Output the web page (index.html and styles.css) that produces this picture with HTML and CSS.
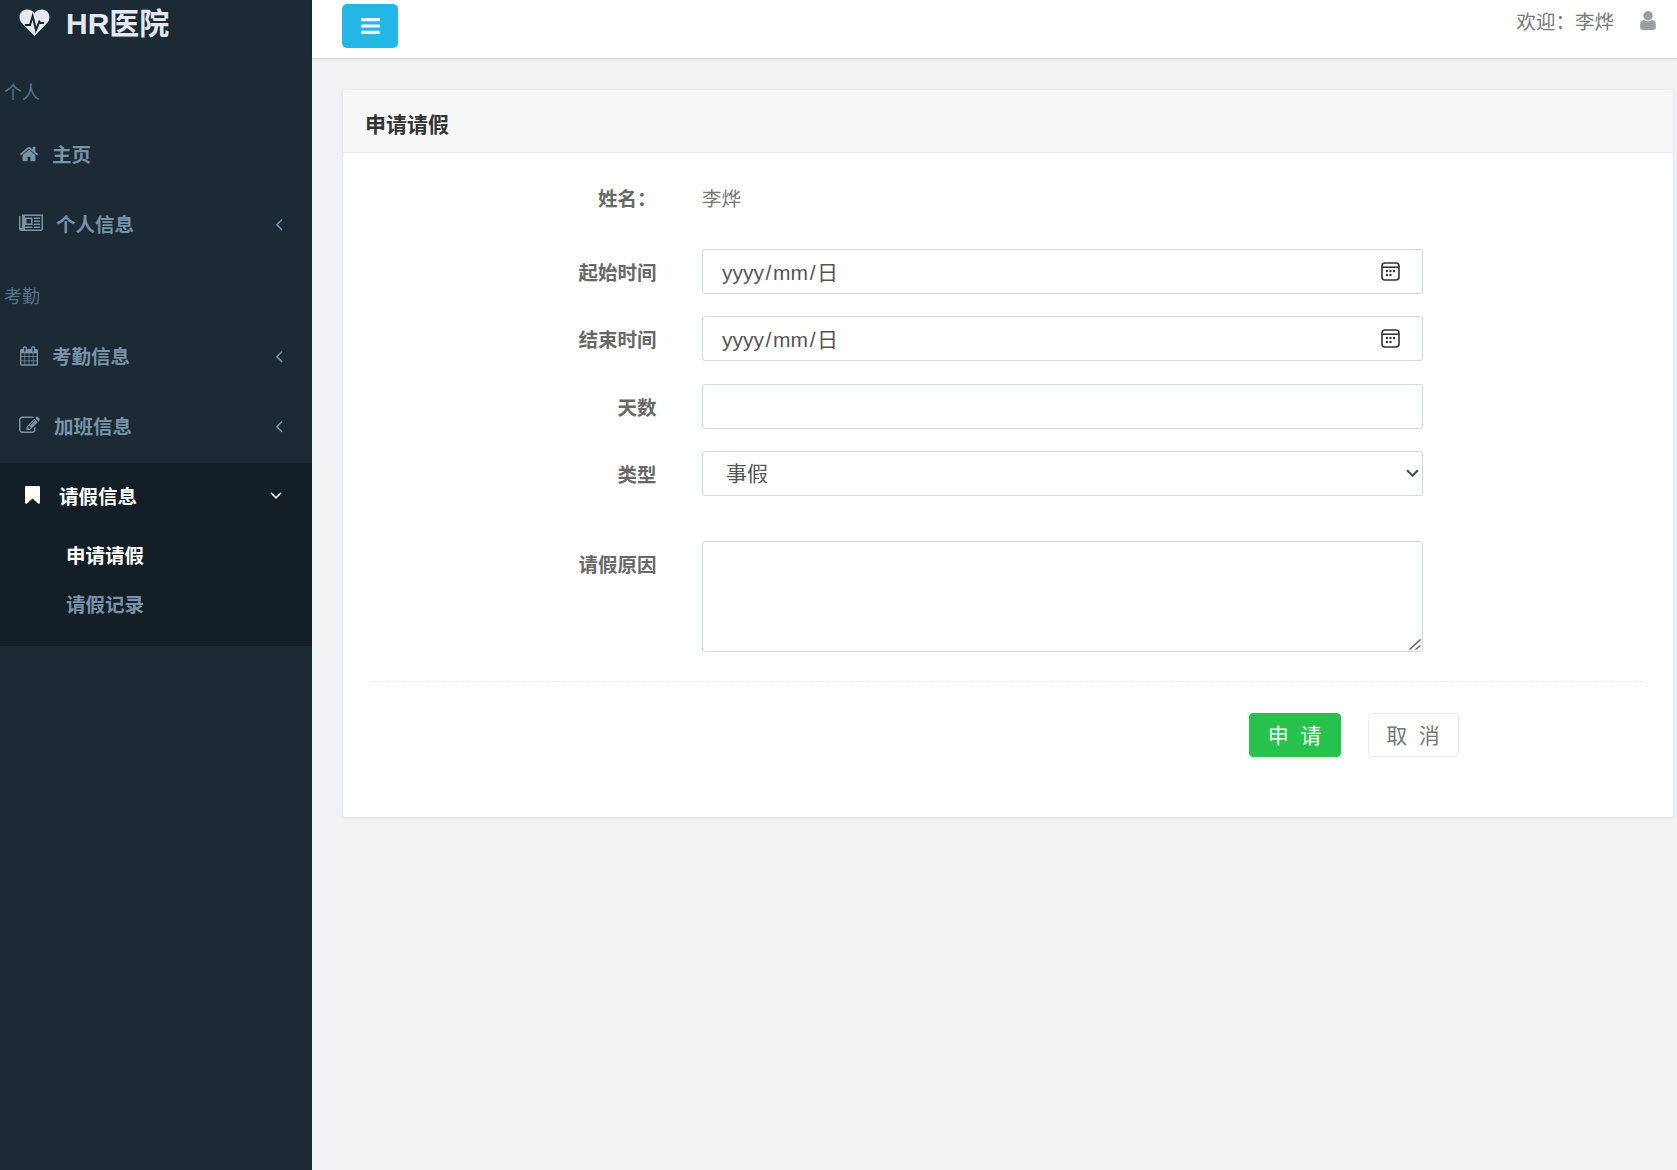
FILE: index.html
```html
<!DOCTYPE html>
<html lang="zh-CN">
<head>
<meta charset="utf-8">
<title>HR医院</title>
<link rel="stylesheet" href="styles.css">
</head>
<body>
<div class="app">
  <aside class="sidebar">
    <div class="logo">
      <svg class="logo-icon" viewBox="0 0 31 27"><path class="heart" d="M15.500 27 3 14.300C-1.600 9.500.4.500 8 .5c3.300 0 6 1.500 7.500 4 1.500-2.500 4.200-4 7.500-4 7.600 0 9.600 9 5 13.800z"/><polyline class="pulse" points="6,16 11,16 13.700,7 17,21 20.300,12.700 21.500,14 25,14"/></svg>
      <span>HR医院</span>
    </div>
    <div class="nav-label nav-label-first">个人</div>
    <a class="nav-item nav-item-first">
      <svg class="icon ic-home" viewBox="0 0 1792 1792"><path d="M1472 992v480q0 26-19 45t-45 19h-384v-384h-256v384h-384q-26 0-45-19t-19-45v-480q0-1 .5-3t.5-3l575-474 575 474q1 2 1 6zm223-69l-62 74q-8 9-21 11h-3q-13 0-21-7l-692-577-692 577q-12 8-24 7-13-2-21-11l-62-74q-8-10-7-23.500t11-21.500l719-599q32-26 76-26t76 26l244 204v-195q0-14 9-23t23-9h192q14 0 23 9t9 23v408l219 182q10 8 11 21.500t-7 23.500z"/></svg>
      <span>主页</span>
    </a>
    <a class="nav-item">
      <svg class="icon ic-news" viewBox="0 0 2048 1792"><path d="M1024 512h-384v384h384v-384zm128 640v128h-640v-128h640zm0-768v640h-640v-640h640zm640 768v128h-512v-128h512zm0-256v128h-512v-128h512zm0-256v128h-512v-128h512zm0-256v128h-512v-128h512zm128 960v-1088h-1408v1088q0 33-11 64h1355q26 0 45-19t19-45zm-1664-128v-960h-128v960q0 26 19 45t45 19 45-19 19-45zm1792-1088v1216q0 80-56 136t-136 56h-1664q-80 0-136-56t-56-136v-1088h256v-128h1664z"/></svg>
      <span>个人信息</span>
      <svg class="chev" viewBox="0 0 1792 1792"><path d="M1203 544q0 13-10 23l-393 393 393 393q10 10 10 23t-10 23l-50 50q-10 10-23 10t-23-10l-466-466q-10-10-10-23t10-23l466-466q10-10 23-10t23 10l50 50q10 10 10 23z"/></svg>
    </a>
    <div class="nav-label">考勤</div>
    <a class="nav-item">
      <svg class="icon ic-cal" viewBox="0 0 1664 1792"><path d="M128 1664h288v-288h-288v288zm352 0h320v-288h-320v288zm-352-352h288v-320h-288v320zm352 0h320v-320h-320v320zm-352-384h288v-288h-288v288zm736 736h320v-288h-320v288zm-384-736h320v-288h-320v288zm768 736h288v-288h-288v288zm-384-352h320v-320h-320v320zm-352-864v-288q0-13-9.500-22.500t-22.500-9.500h-64q-13 0-22.500 9.500t-9.500 22.500v288q0 13 9.500 22.500t22.500 9.500h64q13 0 22.500-9.500t9.500-22.500zm736 864h288v-320h-288v320zm-384-384h320v-288h-320v288zm384 0h288v-288h-288v288zm32-480v-288q0-13-9.500-22.500t-22.500-9.500h-64q-13 0-22.500 9.500t-9.500 22.500v288q0 13 9.500 22.500t22.500 9.500h64q13 0 22.500-9.500t9.500-22.500zm384-64v1280q0 52-38 90t-90 38h-1408q-52 0-90-38t-38-90v-1280q0-52 38-90t90-38h128v-96q0-66 47-113t113-47h64q66 0 113 47t47 113v96h384v-96q0-66 47-113t113-47h64q66 0 113 47t47 113v96h128q52 0 90 38t38 90z"/></svg>
      <span>考勤信息</span>
      <svg class="chev" viewBox="0 0 1792 1792"><path d="M1203 544q0 13-10 23l-393 393 393 393q10 10 10 23t-10 23l-50 50q-10 10-23 10t-23-10l-466-466q-10-10-10-23t10-23l466-466q10-10 23-10t23 10l50 50q10 10 10 23z"/></svg>
    </a>
    <a class="nav-item">
      <svg class="icon ic-edit" viewBox="0 0 1792 1792"><path d="M888 1184l116-116-152-152-116 116v56h96v96h56zm440-720q-16-16-33 1l-350 350q-17 17-1 33t33-1l350-350q17-17 1-33zm80 594v190q0 119-84.500 203.500t-203.500 84.500h-832q-119 0-203.500-84.500t-84.500-203.500v-832q0-119 84.500-203.500t203.500-84.500h832q63 0 117 25 15 7 18 23 3 17-9 29l-49 49q-14 14-32 8-23-6-45-6h-832q-66 0-113 47t-47 113v832q0 66 47 113t113 47h832q66 0 113-47t47-113v-126q0-13 9-22l64-64q15-15 35-7t20 29zm-96-738l288 288-672 672h-288v-288zm444 132l-92 92-288-288 92-92q28-28 68-28t68 28l152 152q28 28 28 68t-28 68z"/></svg>
      <span>加班信息</span>
      <svg class="chev" viewBox="0 0 1792 1792"><path d="M1203 544q0 13-10 23l-393 393 393 393q10 10 10 23t-10 23l-50 50q-10 10-23 10t-23-10l-466-466q-10-10-10-23t10-23l466-466q10-10 23-10t23 10l50 50q10 10 10 23z"/></svg>
    </a>
    <div class="nav-group">
      <a class="nav-item nav-item-open">
        <svg class="icon ic-book" viewBox="256 128 1280 1536"><path d="M1420 128q23 0 44 9 33 13 52.500 41t19.500 62v1289q0 34-19.500 62t-52.500 41q-19 8-44 8-48 0-83-32l-441-424-441 424q-36 33-83 33-23 0-44-9-33-13-52.500-41t-19.500-62v-1289q0-34 19.500-62t52.500-41q21-9 44-9h1048z"/></svg>
        <span>请假信息</span>
        <svg class="chev chev-open" viewBox="0 0 1792 1792"><path d="M1395 736q0 13-10 23l-466 466q-10 10-23 10t-23-10l-466-466q-10-10-10-23t10-23l50-50q10-10 23-10t23 10l393 393 393-393q10-10 23-10t23 10l50 50q10 10 10 23z"/></svg>
      </a>
      <a class="sub-item sub-item-active">申请请假</a>
      <a class="sub-item">请假记录</a>
    </div>
  </aside>
  <div class="main">
    <header class="topbar">
      <button class="menu-btn" type="button">
        <svg class="menu-icon" viewBox="128 256 1536 1280"><path d="M1664 1344v128q0 26-19 45t-45 19h-1408q-26 0-45-19t-19-45v-128q0-26 19-45t45-19h1408q26 0 45 19t19 45zm0-512v128q0 26-19 45t-45 19h-1408q-26 0-45-19t-19-45v-128q0-26 19-45t45-19h1408q26 0 45 19t19 45zm0-512v128q0 26-19 45t-45 19h-1408q-26 0-45-19t-19-45v-128q0-26 19-45t45-19h1408q26 0 45 19t19 45z"/></svg>
      </button>
      <div class="user">
        <span>欢迎：李烨</span>
        <svg class="user-icon" viewBox="256 128 1280 1536"><path d="M1536 1399q0 109-62.500 187t-150.500 78h-854q-88 0-150.500-78t-62.500-187q0-85 8.500-160.500t31.500-152 58.500-131 94-89 134.500-34.500q131 128 313 128t313-128q76 0 134.500 34.500t94 89 58.500 131 31.500 152 8.500 160.500zm-256-887q0 159-112.500 271.500t-271.500 112.500-271.500-112.500-112.500-271.500 112.500-271.500 271.500-112.500 271.500 112.500 112.500 271.500z"/></svg>
      </div>
    </header>
    <section class="card">
      <div class="card-head">申请请假</div>
      <form class="card-body">
        <div class="form-row form-row-name">
          <label class="form-label">姓名：</label>
          <div class="form-static">李烨</div>
        </div>
        <div class="form-row">
          <label class="form-label">起始时间</label>
          <div class="control date-control">
            <span class="date-text">yyyy<span class="date-sep">/</span>mm<span class="date-sep">/</span>日</span>
            <svg class="date-icon" viewBox="0 0 19 19"><rect x="1" y="1" width="17" height="17" rx="3"/><path d="M1 5.200h17"/><g class="dots"><circle cx="6" cy="9" r="1.200"/><circle cx="9.500" cy="9" r="1.200"/><circle cx="13" cy="9" r="1.200"/><circle cx="6" cy="13" r="1.200"/><circle cx="9.500" cy="13" r="1.200"/></g></svg>
          </div>
        </div>
        <div class="form-row">
          <label class="form-label">结束时间</label>
          <div class="control date-control">
            <span class="date-text">yyyy<span class="date-sep">/</span>mm<span class="date-sep">/</span>日</span>
            <svg class="date-icon" viewBox="0 0 19 19"><rect x="1" y="1" width="17" height="17" rx="3"/><path d="M1 5.200h17"/><g class="dots"><circle cx="6" cy="9" r="1.200"/><circle cx="9.500" cy="9" r="1.200"/><circle cx="13" cy="9" r="1.200"/><circle cx="6" cy="13" r="1.200"/><circle cx="9.500" cy="13" r="1.200"/></g></svg>
          </div>
        </div>
        <div class="form-row">
          <label class="form-label">天数</label>
          <input class="control" type="text">
        </div>
        <div class="form-row">
          <label class="form-label">类型</label>
          <div class="select-wrap">
            <select class="control control-select"><option>事假</option></select>
            <svg class="select-arrow" viewBox="0 0 12 7"><polyline points="1,1 6,6 11,1"/></svg>
          </div>
        </div>
        <div class="form-row form-row-area">
          <label class="form-label">请假原因</label>
          <div class="area-wrap">
            <textarea class="control control-area"></textarea>
            <svg class="area-grip" viewBox="0 0 14 14"><path d="M2.500 13.500 13.500 3.500M8.500 13.500l5-4"/></svg>
          </div>
        </div>
        <div class="divider"></div>
        <div class="actions">
          <button class="btn btn-ok" type="button">申&nbsp;&nbsp;请</button>
          <button class="btn btn-cancel" type="button">取&nbsp;&nbsp;消</button>
        </div>
      </form>
    </section>
  </div>
</div>
</body>
</html>
```
FILE: styles.css
```css
* { box-sizing: border-box; }
html, body { margin: 0; height: 100%; }
body {
  height: 1170px;
  overflow: hidden;
  background: #f0f2f4;
  font-family: "Liberation Sans", "Noto Sans CJK SC", sans-serif;
  font-size: 19.5px;
  color: #58666e;
}
.app { display: flex; height: 1170px; }

/* Sidebar */
.sidebar { flex: 0 0 312px; background: #1b2a35; color: #7793a7; }
.logo {
  display: flex;
  align-items: center;
  height: 42px;
  padding-left: 19px;
  font-size: 30px;
  font-weight: 700;
  color: #e3e9ef;
}
.logo-icon { width: 31px; height: 27px; margin: 3px 17px 0 0; }
.logo span { margin-left: -1px; }
.heart { fill: #e3e9ef; }
.pulse { fill: none; stroke: #15212b; stroke-width: 2; stroke-linejoin: miter; }
.nav-label {
  margin: 25px 0 10px 4px;
  font-size: 18px;
  line-height: 27px;
  color: #56748a;
}
.nav-label-first { margin-top: 38px; margin-bottom: 12px; }
.nav-item {
  display: flex;
  align-items: center;
  height: 70px;
  padding: 0 20px;
  font-weight: 700;
  color: #7793a7;
}
.nav-item-first { height: 69.500px; }
.icon { fill: currentColor; flex: none; }
.ic-home { width: 20px; height: 20px; margin-right: 13px; margin-left: -1px; }
.ic-news { width: 24px; height: 21px; margin-right: 13px; margin-left: -1px; }
.ic-cal { width: 18px; height: 20px; margin-right: 14px; }
.ic-edit { width: 21px; height: 21px; margin-right: 14px; margin-left: -1px; }
.ic-book { width: 15px; height: 18px; margin-right: 19px; margin-left: 5px; }
.chev { width: 20px; height: 20px; margin-left: auto; margin-right: 3.300px; fill: #7793a7; }
.nav-group { margin-top: 2px; background: #141e27; padding-bottom: 15.500px; }
.nav-item-open { height: 65px; color: #fff; }
.chev-open { fill: #fff; margin-right: 6.300px; }
.sub-item {
  display: block;
  padding-left: 66px;
  height: 49px;
  line-height: 49px;
  font-weight: 700;
  color: #7793a7;
}
.sub-item-active { color: #fff; margin-top: 4.600px; }

/* Main */
.main { flex: 1; min-width: 0; }
.topbar {
  display: flex;
  justify-content: space-between;
  height: 59px;
  padding: 4px 21px 0 30px;
  background: #fff;
  border-bottom: 1px solid #d8dcdf;
  box-shadow: 0 1px 2px rgba(0, 0, 0, .06);
}
.menu-btn {
  display: flex;
  align-items: center;
  justify-content: center;
  width: 56px;
  height: 44px;
  padding: 0;
  border: 0;
  border-radius: 5px;
  background: #23b7e5;
}
.menu-icon { width: 19px; height: 16px; fill: #fff; }
.user { display: flex; height: 32px; align-items: center; color: #777; }
.user-icon { width: 16px; height: 19px; margin-left: 26px; fill: #98a0a5; }

/* Card */
.card {
  height: 729px;
  margin: 30px 3.500px 0 30px;
  background: #fff;
  border: 1px solid #e6eaec;
  border-radius: 3px;
  box-shadow: 0 1px 2px rgba(0, 0, 0, .05);
}
.card-head {
  display: flex;
  align-items: center;
  height: 63px;
  padding: 3px 0 0 22px;
  background: #f6f8f8;
  border-bottom: 1px solid #e6ebec;
  font-size: 21px;
  font-weight: 700;
  color: #333;
}
.card-body { display: flex; flex-direction: column; padding-top: 33px; }
.form-row {
  display: flex;
  align-items: flex-start;
  margin-bottom: 22.250px;
}
.form-row-name { margin-bottom: 36px; }
.form-row-area { margin-top: 23.250px; }
.form-label {
  flex: 0 0 313.500px;
  margin-right: 45.500px;
  text-align: right;
  font-weight: 700;
  line-height: 27px;
  padding-top: 11px;
  color: #686868;
}
.form-row-name .form-label { padding-top: 0; }
.form-static { line-height: 27px; color: #777; }
.control {
  display: block;
  width: 721px;
  height: 45px;
  padding: 0 19px;
  background: #fff;
  border: 1px solid #cfdadd;
  border-radius: 3px;
  font-family: inherit;
  font-size: 21px;
  color: #555;
}
.date-control {
  display: flex;
  align-items: center;
  justify-content: space-between;
  padding-right: 22px;
}
.date-text { padding-bottom: 2px; }
.date-sep { margin: 0 1.600px; }
.date-icon { width: 19px; height: 19px; fill: none; stroke: #333; stroke-width: 1.600; }
.dots { fill: #333; stroke: none; }
.select-wrap, .area-wrap { position: relative; width: 721px; }
.control-select { appearance: none; padding-left: 23px; }
.select-arrow {
  position: absolute;
  right: 4px;
  top: 18.500px;
  width: 13px;
  height: 8px;
  fill: none;
  stroke: #444;
  stroke-width: 1.800;
  pointer-events: none;
}
.control-area { height: 110.500px; margin: 0; resize: none; }
.area-grip {
  position: absolute;
  right: 2px;
  bottom: 2px;
  width: 14px;
  height: 14px;
  fill: none;
  stroke: #555;
  stroke-width: 1.300;
  pointer-events: none;
}
.divider {
  margin: 7px 30px 0 29px;
  border-top: 1px dashed #eee;
}
.actions {
  display: flex;
  justify-content: flex-end;
  gap: 27px;
  margin-top: 31px;
  padding-right: 213.500px;
}
.btn {
  height: 44px;
  padding: 0 1px 3px 0;
  border-radius: 4px;
  font-family: inherit;
  font-size: 21px;
}
.btn-ok { width: 92px; background: #27c24c; border: 1px solid #27c24c; color: #fff; }
.btn-cancel { width: 91px; background: #fff; border: 1px solid #e8ecee; color: #777; }
```
